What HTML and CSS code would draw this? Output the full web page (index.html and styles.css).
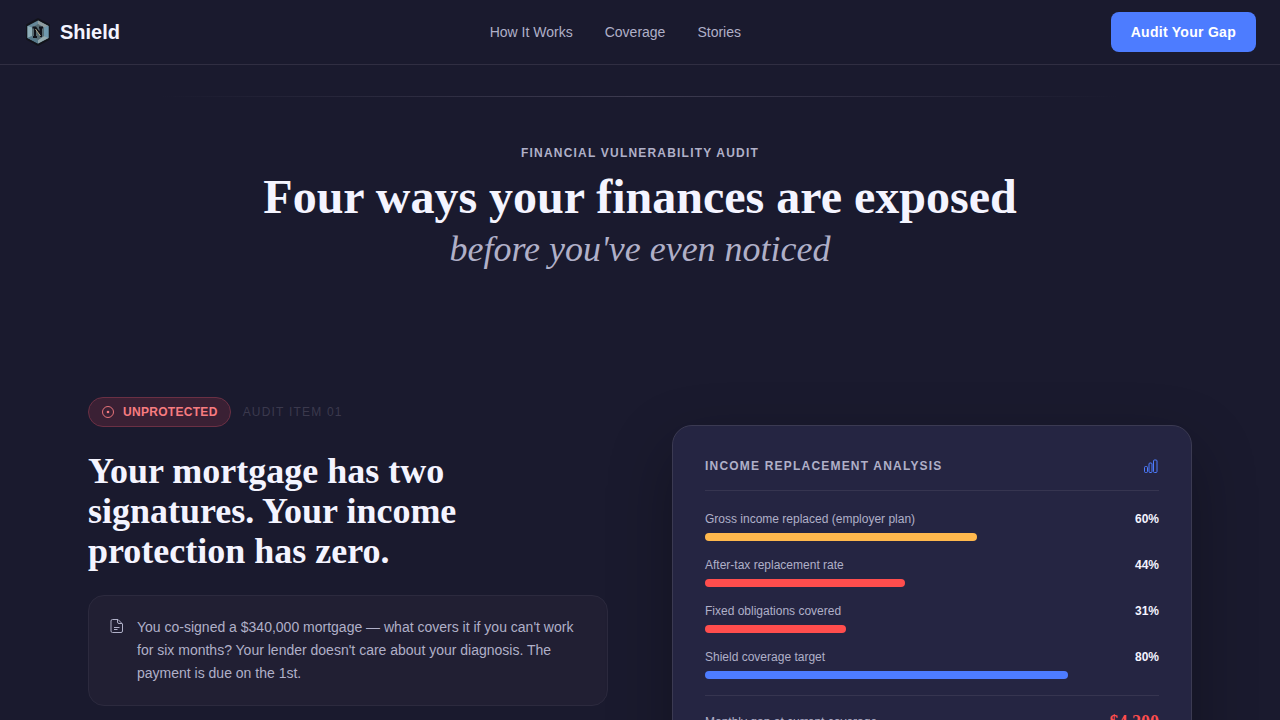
FILE: index.html
```html
<!DOCTYPE html>
<html lang="en">
<head>
    <meta charset="UTF-8">
    <meta name="viewport" content="width=device-width, initial-scale=1.0">
    <title>Shield</title>
    <link rel="stylesheet" href="styles.css">
</head>
<body>
    <header class="navbar">
        <a href="#" class="brand">
            <svg class="brand-logo" viewBox="0 0 28 28" aria-hidden="true">
                <path d="M14 0 26 6.500v15L14 28 2 21.500v-15z" fill="#12131a"/>
                <path d="M14 2.500 24.500 8v12L14 25.500 3.500 20V8z" fill="#668899"/>
                <path d="M14 2.500 24.500 8 20 9.500 14 6z" fill="#8f9d9f"/>
                <path d="M3.500 8 8 9.500V18l-4.500 2z" fill="#8fb0ba"/>
                <path d="M24.500 8 20 9.500V18l4.500 2z" fill="#6f9aae"/>
                <path d="M3.500 20 8 18l6 4v3.500z" fill="#56798a"/>
                <path d="M14 25.500V22l6-4 4.500 2z" fill="#93a9ad"/>
                <path d="M14 6 20 9.500V18l-6 4-6-4V9.500z" fill="#566b72"/>
                <path d="M8.500 9.500h3l5 7v-7M11 10v9M9 19h4M15 9.500h4M17 10v9" fill="none" stroke="#10131a" stroke-width="2"/>
                <path d="M11.500 11l5 7" fill="none" stroke="#b8ad8c" stroke-width="1"/>
            </svg>
            <span>Shield</span>
        </a>
        <nav class="nav-links">
            <a href="#how">How It Works</a>
            <a href="#coverage">Coverage</a>
            <a href="#stories">Stories</a>
        </nav>
        <button type="button" class="cta-button">Audit Your Gap</button>
    </header>

    <main>
        <section class="intro">
            <p class="eyebrow">Financial Vulnerability Audit</p>
            <h1>Four ways your finances are exposed</h1>
            <p class="intro-sub">before you've even noticed</p>
        </section>

        <section class="audit-item" id="coverage">
            <div class="audit-copy">
                <div class="audit-meta">
                    <span class="badge">
                        <svg class="badge-icon" viewBox="0 0 14 14" aria-hidden="true">
                            <circle cx="7" cy="7" r="5.500" fill="none" stroke="currentColor" stroke-width="0.900"/>
                            <circle cx="7" cy="7" r="1.300" fill="currentColor"/>
                        </svg>
                        UNPROTECTED
                    </span>
                    <span class="audit-number">AUDIT ITEM 01</span>
                </div>
                <h2>Your mortgage has two signatures. Your income protection has zero.</h2>
                <div class="scenario">
                    <svg class="scenario-icon" viewBox="0 0 16 16" aria-hidden="true">
                        <path d="M3.500 1.500H9l4.500 4.500v7a1.500 1.500 0 0 1-1.500 1.500H3.500A1.500 1.500 0 0 1 2 13V3a1.500 1.500 0 0 1 1.500-1.500z"/>
                        <path d="M8.500 1.500V4A1.500 1.500 0 0 0 10 5.500h3M5 9.500h5.500M5 11.500h3.500"/>
                    </svg>
                    <p>You co-signed a $340,000 mortgage — what covers it if you can't work for six months? Your lender doesn't care about your diagnosis. The payment is due on the 1st.</p>
                </div>
            </div>

            <div class="analysis-card">
                <div class="card-header">
                    <h3>Income Replacement Analysis</h3>
                    <svg class="chart-icon" viewBox="0 0 16 16" aria-hidden="true">
                        <rect x="1.500" y="8.500" width="3" height="6" rx="1"/>
                        <rect x="6" y="5" width="3" height="9.500" rx="1"/>
                        <rect x="10.500" y="2" width="3.500" height="12.500" rx="1"/>
                    </svg>
                </div>
                <div class="metric">
                    <div class="metric-label"><span>Gross income replaced (employer plan)</span><strong>60%</strong></div>
                    <div class="bar amber" style="width: 60%"></div>
                </div>
                <div class="metric">
                    <div class="metric-label"><span>After-tax replacement rate</span><strong>44%</strong></div>
                    <div class="bar red" style="width: 44%"></div>
                </div>
                <div class="metric">
                    <div class="metric-label"><span>Fixed obligations covered</span><strong>31%</strong></div>
                    <div class="bar red" style="width: 31%"></div>
                </div>
                <div class="metric">
                    <div class="metric-label"><span>Shield coverage target</span><strong>80%</strong></div>
                    <div class="bar blue" style="width: 80%"></div>
                </div>
                <div class="card-total">
                    <span>Monthly gap at current coverage</span>
                    <strong>$4,200</strong>
                </div>
            </div>
        </section>
    </main>
</body>
</html>
```
FILE: styles.css
```css
* {
    box-sizing: border-box;
}
body {
    margin: 0;
    background-color: #1a1a2e;
    color: #b0b0c8;
    font-family: "Liberation Sans", Arial, sans-serif;
    font-size: 14px;
}
h1, h2, h3, p {
    margin: 0;
}
.navbar {
    display: flex;
    align-items: center;
    justify-content: space-between;
    padding: 12px 24px;
    border-bottom: 1px solid #302e42;
}
.brand {
    display: flex;
    align-items: center;
    gap: 8px;
    color: #f4f4ff;
    font-size: 20px;
    font-weight: bold;
    text-decoration: none;
}
.brand-logo {
    width: 28px;
    height: 28px;
}
.nav-links {
    display: flex;
    gap: 32px;
}
.nav-links a {
    color: #b0b0c8;
    text-decoration: none;
}
.cta-button {
    height: 40px;
    padding: 0 20px;
    border: none;
    border-radius: 8px;
    background-color: #4d7cff;
    color: #fff;
    font-family: inherit;
    font-size: 14px;
    font-weight: bold;
    letter-spacing: 0.02em;
    cursor: pointer;
}

/* Section heading */
.intro {
    padding: 31px 24px 0;
    text-align: center;
}
.intro::before {
    content: "";
    display: block;
    max-width: 960px;
    height: 1px;
    margin: 0 auto 48px;
    background: linear-gradient(90deg, transparent, #3d3b50, transparent);
}
.eyebrow {
    font-size: 12px;
    font-weight: bold;
    line-height: 16px;
    letter-spacing: 0.1em;
    text-transform: uppercase;
}
h1, h2 {
    color: #f4f4ff;
    font-family: "Liberation Serif", "Times New Roman", serif;
}
h1 {
    margin-top: 8px;
    font-size: 48px;
    line-height: 56px;
}
.intro-sub {
    margin-top: 4px;
    font-family: "Liberation Serif", "Times New Roman", serif;
    font-size: 36px;
    font-style: italic;
    line-height: 40px;
}

/* Audit item */
.audit-item {
    display: grid;
    grid-template-columns: 1fr 1fr;
    align-items: start;
    gap: 64px;
    max-width: 1200px;
    margin: 0 auto;
    padding: 128px 48px 96px;
}
.audit-meta {
    display: flex;
    align-items: center;
    gap: 12px;
    font-size: 12px;
}
.badge {
    display: flex;
    align-items: center;
    gap: 8px;
    height: 30px;
    padding: 0 12px;
    border: 1px solid #6b3044;
    border-radius: 15px;
    background-color: #3a2034;
    color: #f77c80;
    font-weight: bold;
    letter-spacing: 0.025em;
}
.badge-icon {
    width: 14px;
    height: 14px;
}
.audit-number {
    color: #3b394d;
    letter-spacing: 0.1em;
}
h2 {
    max-width: 400px;
    margin: 24px 0;
    font-size: 36px;
    line-height: 40px;
}
.scenario {
    display: flex;
    gap: 12px;
    padding: 20px;
    border: 1px solid #2c2a3e;
    border-radius: 16px;
    background-color: #211f33;
    line-height: 23px;
}
.scenario-icon {
    flex: none;
    width: 16px;
    height: 16px;
    margin-top: 2px;
    fill: none;
    stroke: #b0b0c8;
}
.analysis-card {
    margin-top: 28px;
    padding: 32px;
    border: 1px solid #3b3a52;
    border-radius: 20px;
    background-color: #252542;
    box-shadow: 0 24px 64px rgba(0, 0, 0, 0.3);
    font-size: 12px;
}
.card-header {
    display: flex;
    align-items: center;
    justify-content: space-between;
    margin-bottom: 20px;
    padding-bottom: 16px;
    border-bottom: 1px solid #363550;
}
h3 {
    font-size: 12px;
    line-height: 16px;
    letter-spacing: 0.1em;
    text-transform: uppercase;
}
.chart-icon {
    width: 16px;
    height: 16px;
    fill: none;
    stroke: #4d7cff;
}
.metric {
    margin-bottom: 16px;
}
.metric-label {
    display: flex;
    justify-content: space-between;
    margin-bottom: 6px;
    line-height: 16px;
}
.metric-label strong {
    color: #f4f4ff;
}
.bar {
    height: 8px;
    border-radius: 4px;
}
.amber {
    background-color: #ffb84d;
}
.red {
    background-color: #ff4d4d;
}
.blue {
    background-color: #4d7cff;
}
.card-total {
    display: flex;
    align-items: center;
    justify-content: space-between;
    padding-top: 12px;
    border-top: 1px solid #363550;
}
.card-total strong {
    color: #ff4d4d;
    font-family: "Liberation Serif", "Times New Roman", serif;
    font-size: 18px;
    line-height: 28px;
}
```
